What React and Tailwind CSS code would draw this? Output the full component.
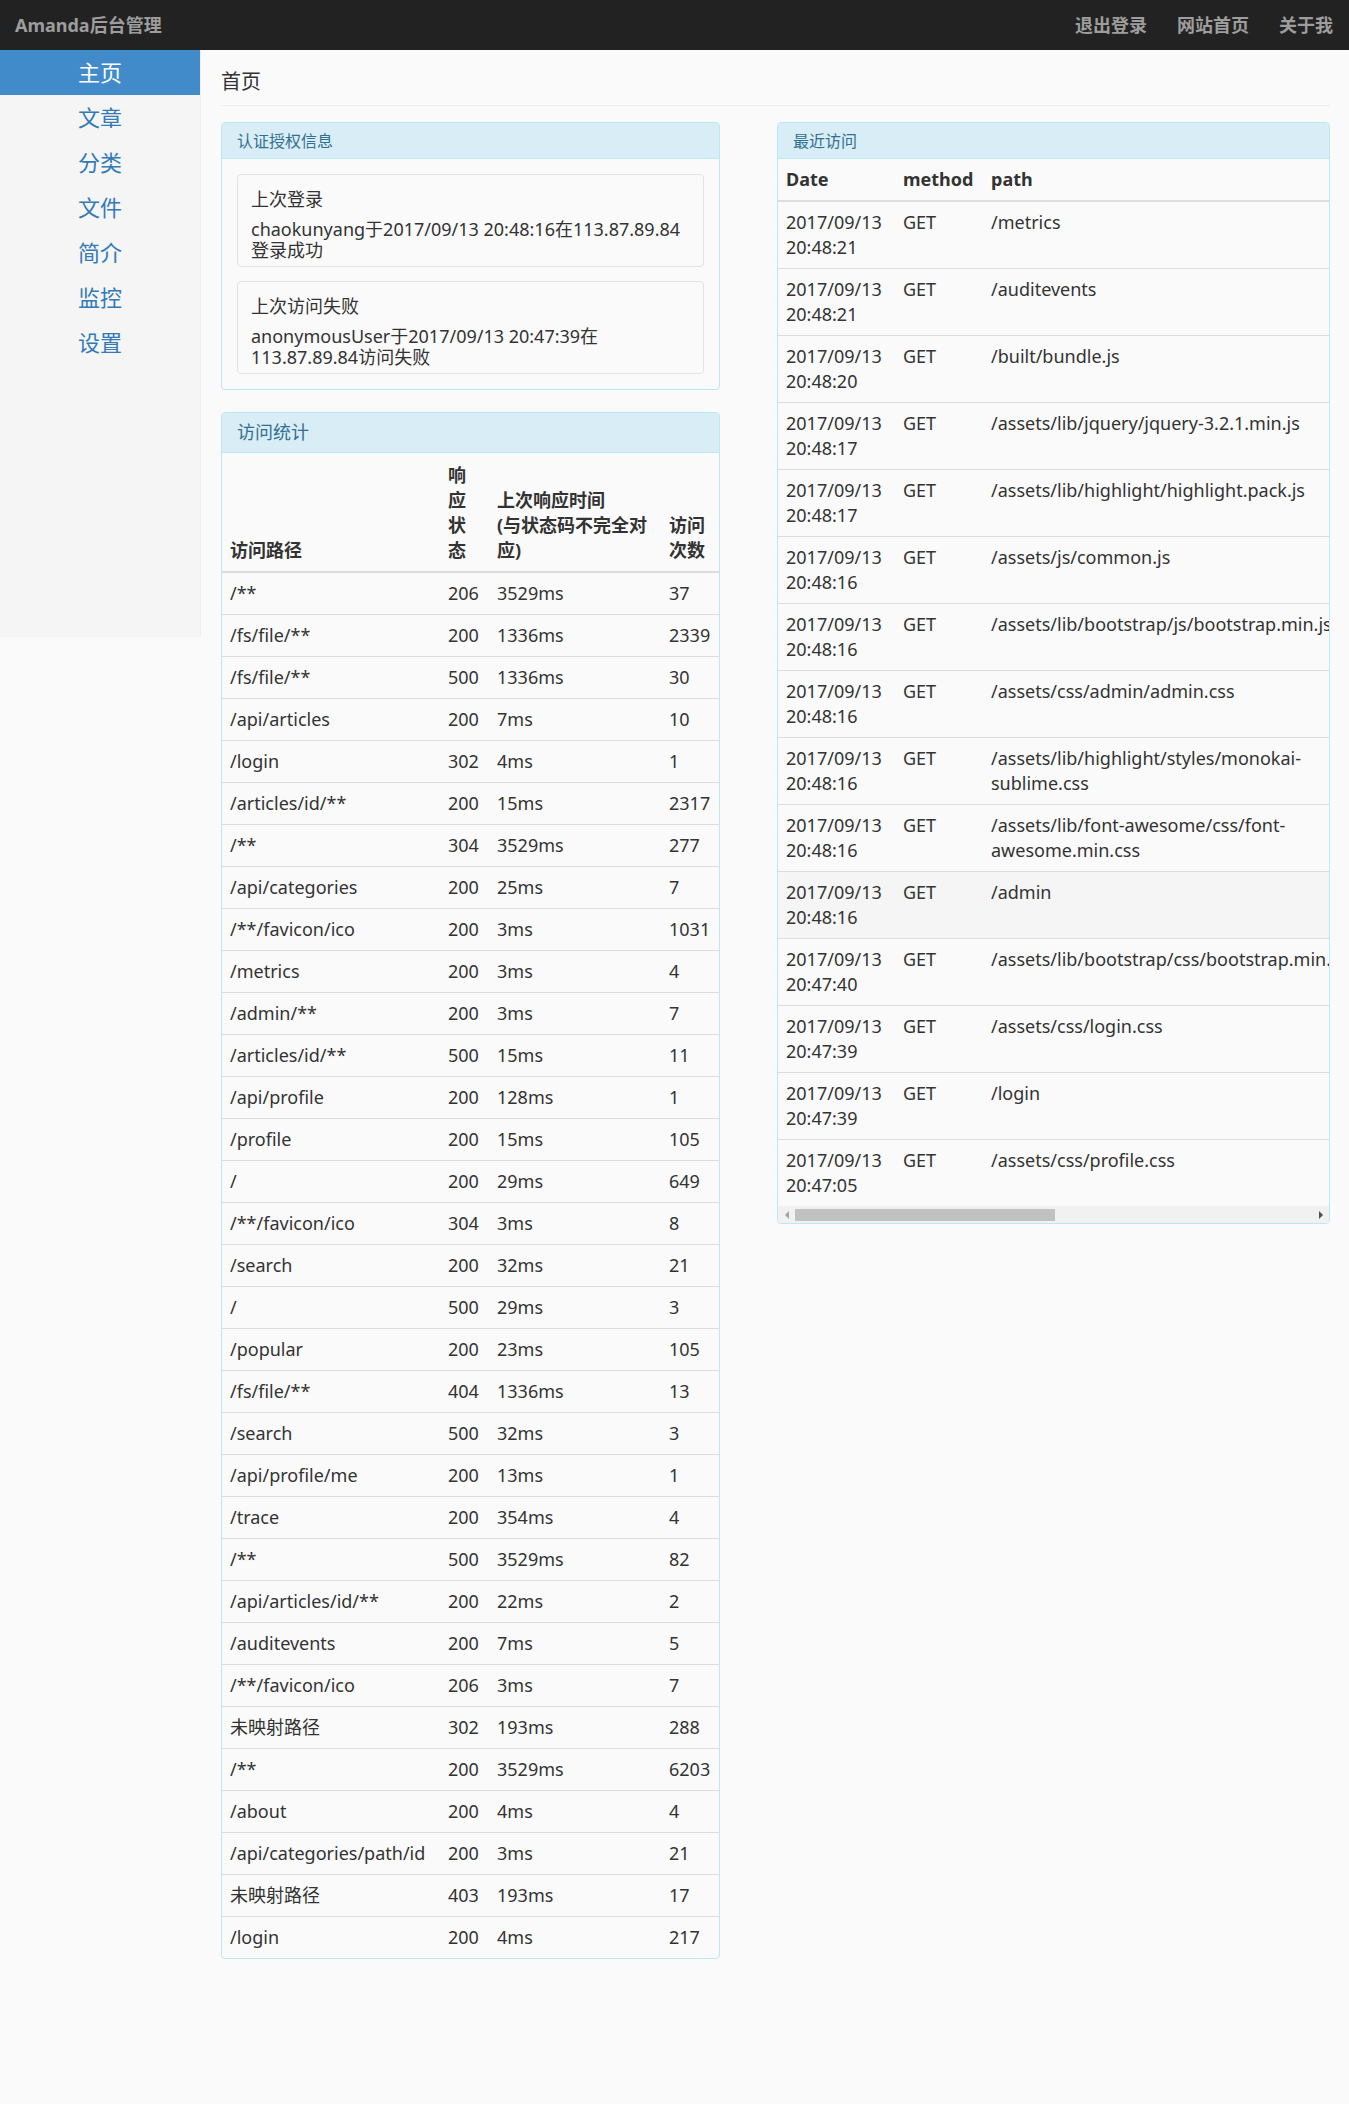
import React from "react";

const stats = [
  ["/**", "206", "3529ms", "37"],
  ["/fs/file/**", "200", "1336ms", "2339"],
  ["/fs/file/**", "500", "1336ms", "30"],
  ["/api/articles", "200", "7ms", "10"],
  ["/login", "302", "4ms", "1"],
  ["/articles/id/**", "200", "15ms", "2317"],
  ["/**", "304", "3529ms", "277"],
  ["/api/categories", "200", "25ms", "7"],
  ["/**/favicon/ico", "200", "3ms", "1031"],
  ["/metrics", "200", "3ms", "4"],
  ["/admin/**", "200", "3ms", "7"],
  ["/articles/id/**", "500", "15ms", "11"],
  ["/api/profile", "200", "128ms", "1"],
  ["/profile", "200", "15ms", "105"],
  ["/", "200", "29ms", "649"],
  ["/**/favicon/ico", "304", "3ms", "8"],
  ["/search", "200", "32ms", "21"],
  ["/", "500", "29ms", "3"],
  ["/popular", "200", "23ms", "105"],
  ["/fs/file/**", "404", "1336ms", "13"],
  ["/search", "500", "32ms", "3"],
  ["/api/profile/me", "200", "13ms", "1"],
  ["/trace", "200", "354ms", "4"],
  ["/**", "500", "3529ms", "82"],
  ["/api/articles/id/**", "200", "22ms", "2"],
  ["/auditevents", "200", "7ms", "5"],
  ["/**/favicon/ico", "206", "3ms", "7"],
  ["未映射路径", "302", "193ms", "288"],
  ["/**", "200", "3529ms", "6203"],
  ["/about", "200", "4ms", "4"],
  ["/api/categories/path/id", "200", "3ms", "21"],
  ["未映射路径", "403", "193ms", "17"],
  ["/login", "200", "4ms", "217"],
];

const access = [
  ["20:48:21", ["/metrics"]],
  ["20:48:21", ["/auditevents"]],
  ["20:48:20", ["/built/bundle.js"]],
  ["20:48:17", ["/assets/lib/jquery/jquery-3.2.1.min.js"]],
  ["20:48:17", ["/assets/lib/highlight/highlight.pack.js"]],
  ["20:48:16", ["/assets/js/common.js"]],
  ["20:48:16", ["/assets/lib/bootstrap/js/bootstrap.min.js"]],
  ["20:48:16", ["/assets/css/admin/admin.css"]],
  ["20:48:16", ["/assets/lib/highlight/styles/monokai-", "sublime.css"]],
  ["20:48:16", ["/assets/lib/font-awesome/css/font-", "awesome.min.css"]],
  ["20:48:16", ["/admin"], true],
  ["20:47:40", ["/assets/lib/bootstrap/css/bootstrap.min.css"]],
  ["20:47:39", ["/assets/css/login.css"]],
  ["20:47:39", ["/login"]],
  ["20:47:05", ["/assets/css/profile.css"]],
];

const nav = ["主页", "文章", "分类", "文件", "简介", "监控", "设置"];

export default function App() {
  return (
    <div className="min-h-[2104px] w-[1349px] overflow-hidden bg-[#fafafa] text-[#333] font-['Noto_Sans','Noto_Sans_CJK_SC',sans-serif]">
      {/* navbar */}
      <div className="h-[50px] bg-[#222] flex items-center justify-between">
        <div className="pl-[15px] text-[18px] font-bold text-[#9d9d9d] leading-[50px]">Amanda后台管理</div>
        <div className="flex pr-[1px]">
          {["退出登录", "网站首页", "关于我"].map((t) => (
            <div key={t} className="px-[15px] text-[18px] font-bold text-[#9d9d9d] leading-[50px]">
              {t}
            </div>
          ))}
        </div>
      </div>

      <div className="flex items-start">
        {/* sidebar */}
        <div className="w-[201px] h-[587px] shrink-0 bg-[#f5f5f5] border-r border-[#eee]">
          {nav.map((t, i) => (
            <div
              key={t}
              className={
                i === 0
                  ? "h-[45px] flex items-center justify-center text-[22px] bg-[#428bca] text-white"
                  : "h-[45px] flex items-center justify-center text-[22px] text-[#337ab7]"
              }
            >
              {t}
            </div>
          ))}
        </div>

        {/* main */}
        <div className="flex-1 min-w-0 pl-[20px] pr-[19px] pt-[18px]">
          <div className="text-[20px] leading-[28px] pb-[9px] border-b border-[#eee]">首页</div>

          <div className="mt-[16px] flex items-start gap-[57px]">
            {/* left column */}
            <div className="w-[499px] shrink-0">
              <div className="border border-[#bce8f1] rounded-[4px] overflow-hidden">
                <div className="h-[36px] bg-[#d9edf7] border-b border-[#bce8f1] px-[15px] flex items-center text-[16px] text-[#31708f]">
                  认证授权信息
                </div>
                <div className="p-[15px]">
                  <div className="border border-[#e3e3e3] rounded-[4px] px-[13px] pt-[12px] pb-[5px]">
                    <div className="text-[18px] leading-[25px]">上次登录</div>
                    <div className="mt-[7px] text-[18px] leading-[21px] whitespace-nowrap">
                      <div>chaokunyang于2017/09/13 20:48:16在113.87.89.84</div>
                      <div>登录成功</div>
                    </div>
                  </div>
                  <div className="mt-[14px] border border-[#e3e3e3] rounded-[4px] px-[13px] pt-[12px] pb-[5px]">
                    <div className="text-[18px] leading-[25px]">上次访问失败</div>
                    <div className="mt-[7px] text-[18px] leading-[21px] whitespace-nowrap">
                      <div>anonymousUser于2017/09/13 20:47:39在</div>
                      <div>113.87.89.84访问失败</div>
                    </div>
                  </div>
                </div>
              </div>

              <div className="mt-[22px] border border-[#bce8f1] rounded-[4px] overflow-hidden">
                <div className="h-[40px] bg-[#d9edf7] border-b border-[#bce8f1] px-[15px] flex items-center text-[18px] text-[#31708f]">
                  访问统计
                </div>
                <table className="w-full table-fixed border-collapse text-[18px] leading-[25px]">
                  <colgroup>
                    <col className="w-[218px]" />
                    <col className="w-[49px]" />
                    <col className="w-[172px]" />
                    <col />
                  </colgroup>
                  <thead>
                    <tr>
                      <th className="px-[8px] pt-[10px] pb-[8px] text-left align-bottom font-bold border-b-2 border-[#ddd]">访问路径</th>
                      <th className="px-[8px] pt-[10px] pb-[8px] text-left align-bottom font-bold border-b-2 border-[#ddd]">
                        响<br />应<br />状<br />态
                      </th>
                      <th className="px-[8px] pt-[10px] pb-[8px] text-left align-bottom font-bold border-b-2 border-[#ddd] whitespace-nowrap">
                        上次响应时间<br />(与状态码不完全对<br />应)
                      </th>
                      <th className="px-[8px] pt-[10px] pb-[8px] text-left align-bottom font-bold border-b-2 border-[#ddd]">
                        访问<br />次数
                      </th>
                    </tr>
                  </thead>
                  <tbody>
                    {stats.map((r, i) => (
                      <tr key={i}>
                        {r.map((c, j) => (
                          <td key={j} className="px-[8px] py-[8px] border-t border-[#ddd] whitespace-nowrap">
                            {c}
                          </td>
                        ))}
                      </tr>
                    ))}
                  </tbody>
                </table>
              </div>
            </div>

            {/* right column */}
            <div className="w-[553px] shrink-0 border border-[#bce8f1] rounded-[4px] overflow-hidden">
              <div className="h-[36px] bg-[#d9edf7] border-b border-[#bce8f1] px-[15px] flex items-center text-[16px] text-[#31708f]">
                最近访问
              </div>
              <div className="w-full overflow-hidden">
                <table className="w-[900px] table-fixed border-collapse text-[18px] leading-[25px]">
                  <colgroup>
                    <col className="w-[117px]" />
                    <col className="w-[88px]" />
                    <col />
                  </colgroup>
                  <thead>
                    <tr>
                      <th className="px-[8px] py-[8px] text-left font-bold border-b-2 border-[#ddd]">Date</th>
                      <th className="px-[8px] py-[8px] text-left font-bold border-b-2 border-[#ddd]">method</th>
                      <th className="px-[8px] py-[8px] text-left font-bold border-b-2 border-[#ddd]">path</th>
                    </tr>
                  </thead>
                  <tbody>
                    {access.map((r, i) => (
                      <tr key={i} className={r[2] ? "bg-[#f5f5f5]" : ""}>
                        <td className="px-[8px] py-[8px] border-t border-[#ddd] align-top whitespace-nowrap">
                          2017/09/13
                          <br />
                          {r[0]}
                        </td>
                        <td className="px-[8px] py-[8px] border-t border-[#ddd] align-top">GET</td>
                        <td className="px-[8px] py-[8px] border-t border-[#ddd] align-top whitespace-nowrap">
                          {r[1].map((p, k) => (
                            <div key={k}>{p}</div>
                          ))}
                        </td>
                      </tr>
                    ))}
                  </tbody>
                </table>
              </div>
              {/* scrollbar */}
              <div className="h-[17px] bg-[#f1f1f1] flex items-center">
                <div className="w-[17px] h-[17px] flex items-center justify-center">
                  <div className="w-0 h-0 border-y-[4px] border-y-transparent border-r-[4px] border-r-[#a3a3a3]" />
                </div>
                <div className="w-[260px] h-[12px] bg-[#c1c1c1]" />
                <div className="flex-1" />
                <div className="w-[17px] h-[17px] flex items-center justify-center">
                  <div className="w-0 h-0 border-y-[4px] border-y-transparent border-l-[4px] border-l-[#505050]" />
                </div>
              </div>
            </div>
          </div>
        </div>
      </div>
    </div>
  );
}
